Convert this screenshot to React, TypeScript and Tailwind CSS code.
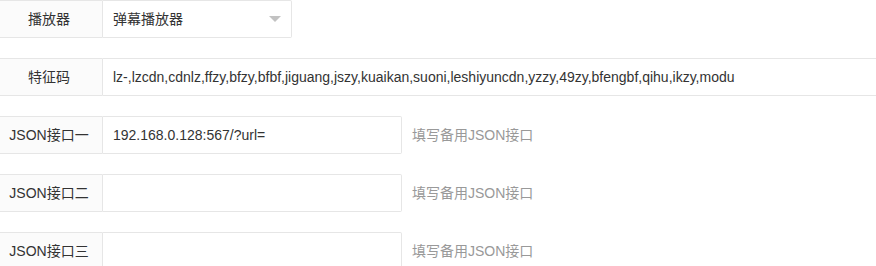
import React from "react";

const font = { fontFamily: '"Liberation Sans", "Noto Sans CJK SC", sans-serif' };

function Label({ children }: { children: React.ReactNode }) {
  return (
    <div className="ml-[-7px] flex h-[38px] w-[110px] shrink-0 items-center justify-center rounded-l-[2px] border border-[#e6e6e6] bg-[#fbfbfb] pl-[2px] text-[14px] text-[#333]">
      {children}
    </div>
  );
}

function JsonRow({ label, value }: { label: string; value?: string }) {
  return (
    <div className="flex items-center">
      <Label>{label}</Label>
      <div className="flex h-[38px] w-[299px] items-center rounded-r-[2px] border border-l-0 border-[#e6e6e6] bg-white pl-[10px] text-[14px] text-[#333]">
        {value}
      </div>
      <div className="ml-[10px] text-[14px] text-[#999]">填写备用JSON接口</div>
    </div>
  );
}

export default function App() {
  return (
    <div className="flex w-[876px] flex-col gap-[20px] overflow-hidden bg-white" style={font}>
      <div className="flex items-center">
        <Label>播放器</Label>
        <div className="relative flex h-[38px] w-[189px] items-center rounded-r-[2px] border border-l-0 border-[#e6e6e6] bg-white pl-[10px] text-[14px] text-[#333]">
          弹幕播放器
          <span className="absolute right-[10px] top-1/2 mt-[-3px] h-0 w-0 border-x-[6px] border-t-[6px] border-x-transparent border-t-[#c2c2c2]" />
        </div>
      </div>
      <div className="flex items-center">
        <Label>特征码</Label>
        <div className="flex h-[38px] w-[900px] shrink-0 items-center border border-l-0 border-[#e6e6e6] bg-white pl-[10px] text-[14px] text-[#333] whitespace-nowrap">
          lz-,lzcdn,cdnlz,ffzy,bfzy,bfbf,jiguang,jszy,kuaikan,suoni,leshiyuncdn,yzzy,49zy,bfengbf,qihu,ikzy,modu
        </div>
      </div>
      <JsonRow label="JSON接口一" value="192.168.0.128:567/?url=" />
      <JsonRow label="JSON接口二" />
      <JsonRow label="JSON接口三" />
    </div>
  );
}
